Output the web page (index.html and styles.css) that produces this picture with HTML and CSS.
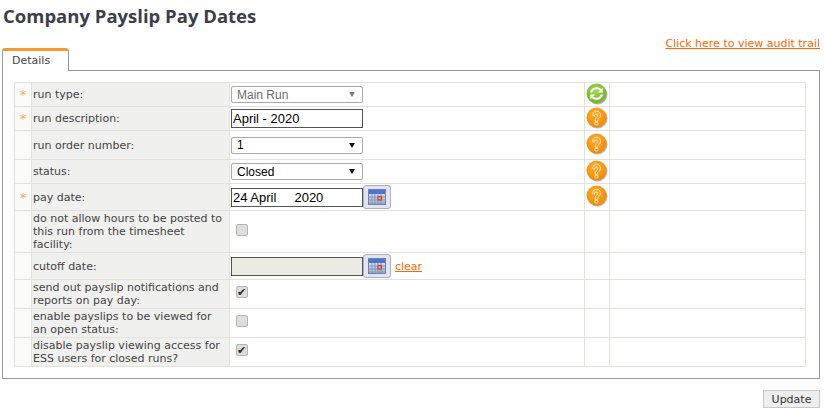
FILE: index.html
```html
<!DOCTYPE html>
<html lang="en">
<head>
    <meta charset="UTF-8">
    <meta name="viewport" content="width=device-width, initial-scale=1.0">
    <title>Company Payslip Pay Dates</title>
    <link rel="stylesheet" href="styles.css">
</head>
<body>
    <svg class="icon-defs" width="0" height="0">
        <defs>
            <radialGradient id="orangeFill" cx="45%" cy="35%" r="70%">
                <stop offset="0" stop-color="#ffb02e"/>
                <stop offset="1" stop-color="#f58400"/>
            </radialGradient>
            <radialGradient id="greenFill" cx="45%" cy="35%" r="70%">
                <stop offset="0" stop-color="#a5d651"/>
                <stop offset="1" stop-color="#71ad2b"/>
            </radialGradient>
            <linearGradient id="calFill" x1="0" y1="0" x2="0" y2="1">
                <stop offset="0" stop-color="#e8eefa"/>
                <stop offset="1" stop-color="#a9b8d3"/>
            </linearGradient>
            <symbol id="helpIcon" viewBox="0 0 22 22">
                <circle cx="11.5" cy="11.5" r="10" fill="#8f8f8f" opacity="0.65"/>
                <circle cx="10.5" cy="10.5" r="10" fill="url(#orangeFill)"/>
                <path d="M6.6 8.2a4 4 0 1 1 6.3 3.2c-.8.6-1.2 1.1-1.2 2v1h-2.4v-1.5c0-1.2.6-2 1.5-2.7.7-.5 1-1 1-1.6a1.7 1.7 0 0 0-3.4 0.6z" fill="none" stroke="#ffe7bf" stroke-width="1"/>
                <rect x="8.8" y="15.4" width="3.2" height="2.6" rx="1" fill="none" stroke="#ffe7bf" stroke-width="1"/>
            </symbol>
            <symbol id="refreshIcon" viewBox="0 0 22 22">
                <circle cx="11.5" cy="11.5" r="10" fill="#8f8f8f" opacity="0.65"/>
                <circle cx="10.5" cy="10.5" r="10" fill="url(#greenFill)"/>
                <path d="M5 9.5a5.7 5.7 0 0 1 9.6-2.6" fill="none" stroke="#fff" stroke-width="2"/>
                <path d="M16.6 4.6v4.8h-4.8z" fill="#fff"/>
                <path d="M16 11.5a5.7 5.7 0 0 1-9.6 2.6" fill="none" stroke="#fff" stroke-width="2"/>
                <path d="M4.4 16.4v-4.8h4.8z" fill="#fff"/>
            </symbol>
            <symbol id="calendarIcon" viewBox="0 0 18 16">
                <rect x="0.5" y="0.5" width="17" height="15" fill="url(#calFill)" stroke="#6f83a8"/>
                <rect x="1" y="1" width="16" height="4" fill="#4a76cf"/>
                <path d="M1 8h16M1 11h16M1 14h16M4 5v10M7 5v10M10 5v10M13 5v10" stroke="#7f97c2" stroke-width="1"/>
                <rect x="10" y="7.5" width="3.5" height="3.5" fill="none" stroke="#e2401c" stroke-width="1.2"/>
            </symbol>
        </defs>
    </svg>

    <h1 class="page-title">Company Payslip Pay Dates</h1>

    <div class="tab-bar">
        <div class="tab">Details</div>
        <a class="audit-link" href="#">Click here to view audit trail</a>
    </div>

    <div class="panel">
        <table class="form-table">
            <tr class="row-a">
                <td class="req">*</td>
                <td class="label">run type:</td>
                <td class="field">
                    <span class="select-box disabled"><select disabled><option>Main Run</option></select></span>
                </td>
                <td class="action"><svg class="round-icon"><use href="#refreshIcon"/></svg></td>
                <td></td>
            </tr>
            <tr class="row-a">
                <td class="req">*</td>
                <td class="label">run description:</td>
                <td class="field"><input class="text-input" type="text" value="April - 2020"></td>
                <td class="action"><svg class="round-icon"><use href="#helpIcon"/></svg></td>
                <td></td>
            </tr>
            <tr class="row-b">
                <td class="req"></td>
                <td class="label">run order number:</td>
                <td class="field">
                    <span class="select-box"><select><option>1</option></select></span>
                </td>
                <td class="action"><svg class="round-icon"><use href="#helpIcon"/></svg></td>
                <td></td>
            </tr>
            <tr class="row-a">
                <td class="req"></td>
                <td class="label">status:</td>
                <td class="field">
                    <span class="select-box"><select><option>Closed</option></select></span>
                </td>
                <td class="action"><svg class="round-icon"><use href="#helpIcon"/></svg></td>
                <td></td>
            </tr>
            <tr class="row-c">
                <td class="req">*</td>
                <td class="label">pay date:</td>
                <td class="field">
                    <div class="date-field">
                        <input class="text-input" type="text" value="24 April     2020">
                        <button class="cal-btn" type="button"><svg class="cal-icon"><use href="#calendarIcon"/></svg></button>
                    </div>
                </td>
                <td class="action"><svg class="round-icon"><use href="#helpIcon"/></svg></td>
                <td></td>
            </tr>
            <tr class="row-d">
                <td class="req"></td>
                <td class="label">do not allow hours to be posted to this run from the timesheet facility:</td>
                <td class="field"><input class="check" type="checkbox"></td>
                <td></td>
                <td></td>
            </tr>
            <tr class="row-c">
                <td class="req"></td>
                <td class="label">cutoff date:</td>
                <td class="field">
                    <div class="date-field">
                        <input class="text-input readonly" type="text" readonly>
                        <button class="cal-btn" type="button"><svg class="cal-icon"><use href="#calendarIcon"/></svg></button>
                        <a class="clear-link" href="#">clear</a>
                    </div>
                </td>
                <td></td>
                <td></td>
            </tr>
            <tr class="row-b">
                <td class="req"></td>
                <td class="label">send out payslip notifications and reports on pay day:</td>
                <td class="field"><input class="check" type="checkbox" checked></td>
                <td></td>
                <td></td>
            </tr>
            <tr class="row-b">
                <td class="req"></td>
                <td class="label">enable payslips to be viewed for an open status:</td>
                <td class="field"><input class="check" type="checkbox"></td>
                <td></td>
                <td></td>
            </tr>
            <tr class="row-b">
                <td class="req"></td>
                <td class="label">disable payslip viewing access for ESS users for closed runs?</td>
                <td class="field"><input class="check" type="checkbox" checked></td>
                <td></td>
                <td></td>
            </tr>
        </table>
    </div>

    <div class="button-row">
        <button class="update-btn" type="button">Update</button>
    </div>
</body>
</html>
```

FILE: styles.css
```css
* {
    box-sizing: border-box;
}

body {
    margin: 0;
    padding: 0 4px 0 2px;
    font-family: "DejaVu Sans", Verdana, sans-serif;
    font-size: 11px;
    color: #444;
    background: #fff;
    overflow: hidden;
}

.icon-defs {
    display: block;
    height: 0;
}

.page-title {
    margin: 0;
    padding: 5px 0 0 1px;
    height: 48px;
    font-family: "Open Sans", "DejaVu Sans", sans-serif;
    font-size: 18.5px;
    line-height: 22px;
    font-weight: bold;
    color: #3c3f4a;
}

.tab-bar {
    display: flex;
    justify-content: space-between;
    height: 22px;
}

.tab {
    width: 67px;
    height: 23px;
    margin-bottom: -1px;
    padding: 3px 0 0 9px;
    background: #fff;
    border: 1px solid #999;
    border-bottom: 0;
    border-top: 3px solid #f7992e;
    border-radius: 3px 3px 0 0;
    line-height: 13px;
    position: relative;
    z-index: 1;
}

.audit-link {
    margin-top: -11px;
    color: #f60;
    line-height: 13px;
    height: 15px;
}

.panel {
    height: 309px;
    padding: 11px 13px 0 11px;
    border: 1px solid #999;
}

.form-table {
    width: 792px;
    table-layout: fixed;
    border-collapse: collapse;
}

.form-table td {
    padding: 0;
    border: 1px solid #e2e2da;
    line-height: 13px;
}

.form-table td:nth-child(1) {
    width: 17px;
}

.form-table td:nth-child(2) {
    width: 198px;
}

.form-table td:nth-child(3) {
    width: 355px;
}

.form-table td:nth-child(4) {
    width: 25px;
}

.row-a td {
    height: 24px;
}

.row-b td {
    height: 29px;
}

.row-c td {
    height: 27px;
}

.row-d td {
    height: 42px;
}

.form-table .req {
    background: #fafaf8;
    color: #f9a94f;
    text-align: center;
    font-size: 13px;
}

.form-table .label {
    padding: 0 4px 0 1px;
    background: #f0f0ee;
    color: #444;
}

.form-table .field {
    padding-left: 1px;
}

.form-table .action {
    padding-left: 1px;
}

.round-icon {
    display: block;
    width: 22px;
    height: 22px;
    margin-top: -2px;
}

.select-box {
    display: block;
    position: relative;
    width: 132px;
    height: 17px;
}

.select-box select {
    appearance: none;
    display: block;
    width: 100%;
    height: 100%;
    padding: 0 0 0 5px;
    border: 1px solid #a9a9a9;
    border-radius: 2px;
    background: #fff;
    color: #000;
    font: 12px "Liberation Sans", Arial, sans-serif;
    opacity: 1;
}

.select-box::after {
    content: "";
    position: absolute;
    top: 6px;
    right: 8px;
    border-style: solid;
    border-width: 5px 3px 0 3px;
    border-color: #111 transparent transparent transparent;
}

.select-box.disabled select {
    color: #6d6d6d;
}

.select-box.disabled::after {
    border-top-color: #777;
}

.text-input {
    display: block;
    width: 132px;
    height: 19px;
    padding: 0 1px;
    border: 1px solid #555;
    background: #fff;
    color: #000;
    font: 13px "Liberation Sans", Arial, sans-serif;
    white-space: pre;
}

.text-input.readonly {
    background: #ebebe4;
}

.date-field {
    display: flex;
    align-items: center;
}

.cal-btn {
    display: block;
    width: 28px;
    height: 24px;
    padding: 0;
    border: 1px solid #a9adc2;
    border-radius: 3px;
    background: #e4e4ee;
}

.cal-icon {
    display: block;
    width: 18px;
    height: 16px;
    margin: 0 auto;
}

.clear-link {
    margin-left: 4px;
    color: #f60;
}

.check {
    appearance: none;
    display: block;
    position: relative;
    width: 12px;
    height: 12px;
    margin: -4px 0 0 5px;
    border: 1px solid #b5b5b5;
    border-radius: 2px;
    background: #ddd;
}

.check:checked::after {
    content: "\2714";
    position: absolute;
    top: -1px;
    left: 0;
    font-size: 11px;
    line-height: 12px;
    color: #2c2c2c;
}

.button-row {
    display: flex;
    justify-content: flex-end;
    padding-top: 11px;
}

.update-btn {
    width: 57px;
    height: 18px;
    padding: 0;
    border: 1px solid #c8c8c8;
    background: #eee;
    color: #333;
    font: 11px "DejaVu Sans", Verdana, sans-serif;
}
```
